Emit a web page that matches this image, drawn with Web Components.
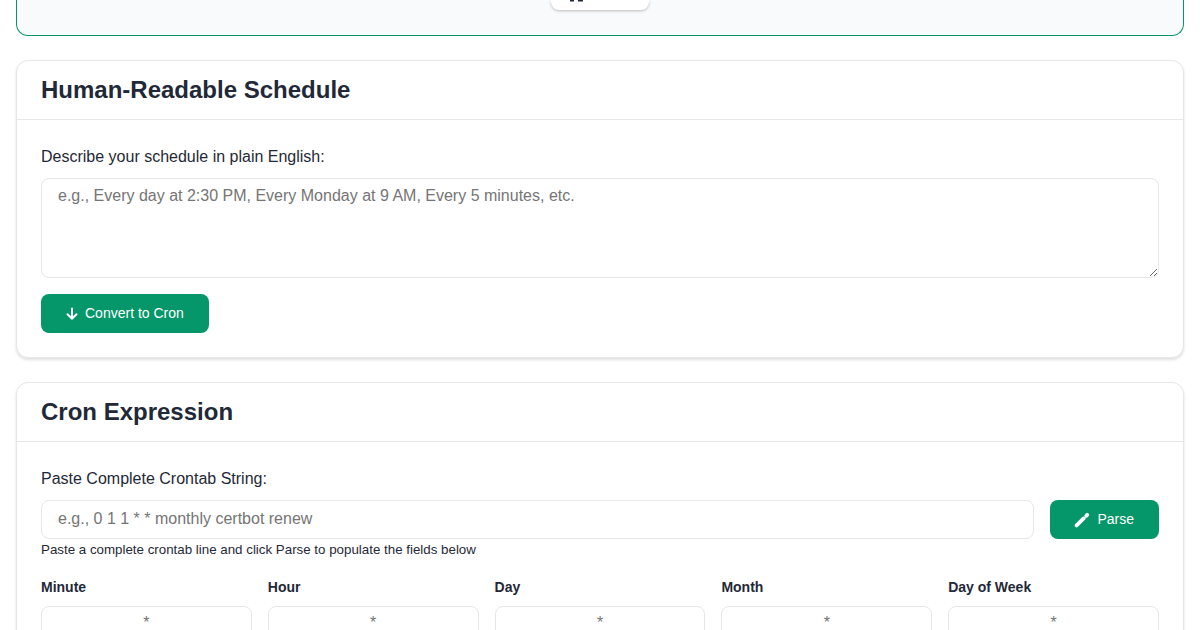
<!DOCTYPE html>
<html>
<head>
<meta charset="utf-8">
<title>Cron Expression Generator</title>
<style>
  html, body { margin: 0; height: 630px; overflow: hidden; background: #fff; }
  body { font-family: "Liberation Sans", Arial, sans-serif; color: #1f2937; }
  main { display: flex; flex-direction: column; gap: 24px; padding: 0 16px; }
</style>
</head>
<body>
<main>
  <result-strip></result-strip>
  <app-card heading="Human-Readable Schedule">
    <schedule-form></schedule-form>
  </app-card>
  <app-card heading="Cron Expression">
    <cron-form></cron-form>
  </app-card>
</main>

<template id="green-button">
  <style>
    :host { display: inline-block; flex: none; }
    button {
      display: flex; align-items: center; justify-content: center;
      height: 39px; padding: 0 25px 0 24px; box-sizing: border-box;
      border: none; border-radius: 8px;
      background: #059669; color: #fff;
      font: 14px/21px "Liberation Sans", Arial, sans-serif; cursor: pointer;
    }
    ::slotted(svg) { display: block; }
  </style>
  <button><slot name="icon"></slot><slot></slot></button>
</template>

<script>
  class ResultStrip extends HTMLElement {
    constructor() {
      super();
      this.attachShadow({ mode: 'open' });
      this.shadowRoot.innerHTML = `
        <style>
          :host {
            display: flex; justify-content: center; height: 36px; box-sizing: border-box;
            background: #f9fafb; border: 1px solid #059669; border-top: none;
            border-radius: 0 0 12px 12px;
          }
          .copy {
            width: 98px; height: 10px; padding-left: 19px; box-sizing: border-box;
            background: #fff; border-radius: 0 0 8px 8px;
            box-shadow: 0 1px 3px rgba(0,0,0,.25);
          }
          svg { display: block; }
        </style>
        <div class="copy">
          <svg width="14" height="2" viewBox="0 0 14 2" fill="#1f2937"><path d="M0 0h4v1.5H0zM8 0h5v1.5H8z"/></svg>
        </div>
      `;
    }
  }

  class AppCard extends HTMLElement {
    constructor() {
      super();
      this.attachShadow({ mode: 'open' });
      this.shadowRoot.innerHTML = `
        <style>
          :host {
            display: block; background: #fff; border: 1px solid #e5e7eb; border-radius: 12px;
            box-shadow: 0 2px 3px rgba(0,0,0,.12);
          }
          header { padding: 12px 24px; border-bottom: 1px solid #e5e7eb; }
          h2 { margin: 0; font-size: 24px; line-height: 34px; font-weight: 700; color: #1f2937; }
          section { padding: 25px 24px 24px; }
        </style>
        <header><h2>${this.getAttribute('heading')}</h2></header>
        <section><slot></slot></section>
      `;
    }
  }

  class GreenButton extends HTMLElement {
    constructor() {
      super();
      this.attachShadow({ mode: 'open' });
      this.shadowRoot.appendChild(document.getElementById('green-button').content.cloneNode(true));
    }
  }

  const fieldStyles = `
    label { display: block; font-size: 16px; line-height: 24px; margin-bottom: 9px; color: #1f2937; }
    input, textarea {
      display: block; width: 100%; box-sizing: border-box;
      border: 1px solid #e5e7eb; border-radius: 8px; background: #fff; color: #1f2937;
      font: 16px/24px "Liberation Sans", Arial, sans-serif; padding: 5px 16px 7px; margin: 0;
    }
    input::placeholder, textarea::placeholder { color: #757575; opacity: 1; }
  `;

  class ScheduleForm extends HTMLElement {
    constructor() {
      super();
      this.attachShadow({ mode: 'open' });
      this.shadowRoot.innerHTML = `
        <style>
          :host { display: block; }
          ${fieldStyles}
          textarea { height: 100px; resize: vertical; }
          green-button { margin-top: 16px; display: block; width: fit-content; }
          svg { margin-right: 6px; }
        </style>
        <label>Describe your schedule in plain English:</label>
        <textarea placeholder="e.g., Every day at 2:30 PM, Every Monday at 9 AM, Every 5 minutes, etc."></textarea>
        <green-button>
          <svg slot="icon" width="14" height="14" viewBox="0 0 14 14" fill="none" stroke="#fff" stroke-width="2" stroke-linecap="round" stroke-linejoin="round"><path d="M7 1.5v10M2.5 7.3 7 11.7l4.5-4.4"/></svg>
          Convert to Cron
        </green-button>
      `;
    }
  }

  class CronForm extends HTMLElement {
    constructor() {
      super();
      this.attachShadow({ mode: 'open' });
      const fields = ['Minute', 'Hour', 'Day', 'Month', 'Day of Week'].map((name) => `
        <div class="field">
          <span>${name}</span>
          <input value="*" aria-label="${name}">
        </div>`).join('');
      this.shadowRoot.innerHTML = `
        <style>
          :host { display: block; }
          ${fieldStyles}
          .row { display: flex; gap: 16px; }
          .row input { flex: 1; min-width: 0; height: 39px; }
          .row svg { margin-right: 7px; }
          small { display: block; font-size: 13.33px; line-height: 20px; margin-top: 1px; color: #1f2937; }
          .fields { display: grid; grid-template-columns: repeat(5, 1fr); gap: 16px; margin-top: 17px; }
          .field span { display: block; font-size: 14px; font-weight: 700; line-height: 21px; margin-bottom: 8px; color: #1f2937; }
          .field input { text-align: center; height: 34px; padding: 4px 16px; color: #757575; }
        </style>
        <label>Paste Complete Crontab String:</label>
        <div class="row">
          <input placeholder="e.g., 0 1 1 * * monthly certbot renew">
          <green-button>
            <svg slot="icon" width="16" height="16" viewBox="0 0 16 16" fill="none" stroke="#fff" stroke-linecap="round"><path stroke-width="3.8" d="M2.6 13.4 9.6 6.4"/><path stroke-width="3.8" d="M12.2 3.8l1-1"/></svg>
            Parse
          </green-button>
        </div>
        <small>Paste a complete crontab line and click Parse to populate the fields below</small>
        <div class="fields">${fields}</div>
      `;
    }
  }

  customElements.define('result-strip', ResultStrip);
  customElements.define('app-card', AppCard);
  customElements.define('green-button', GreenButton);
  customElements.define('schedule-form', ScheduleForm);
  customElements.define('cron-form', CronForm);
</script>
</body>
</html>
